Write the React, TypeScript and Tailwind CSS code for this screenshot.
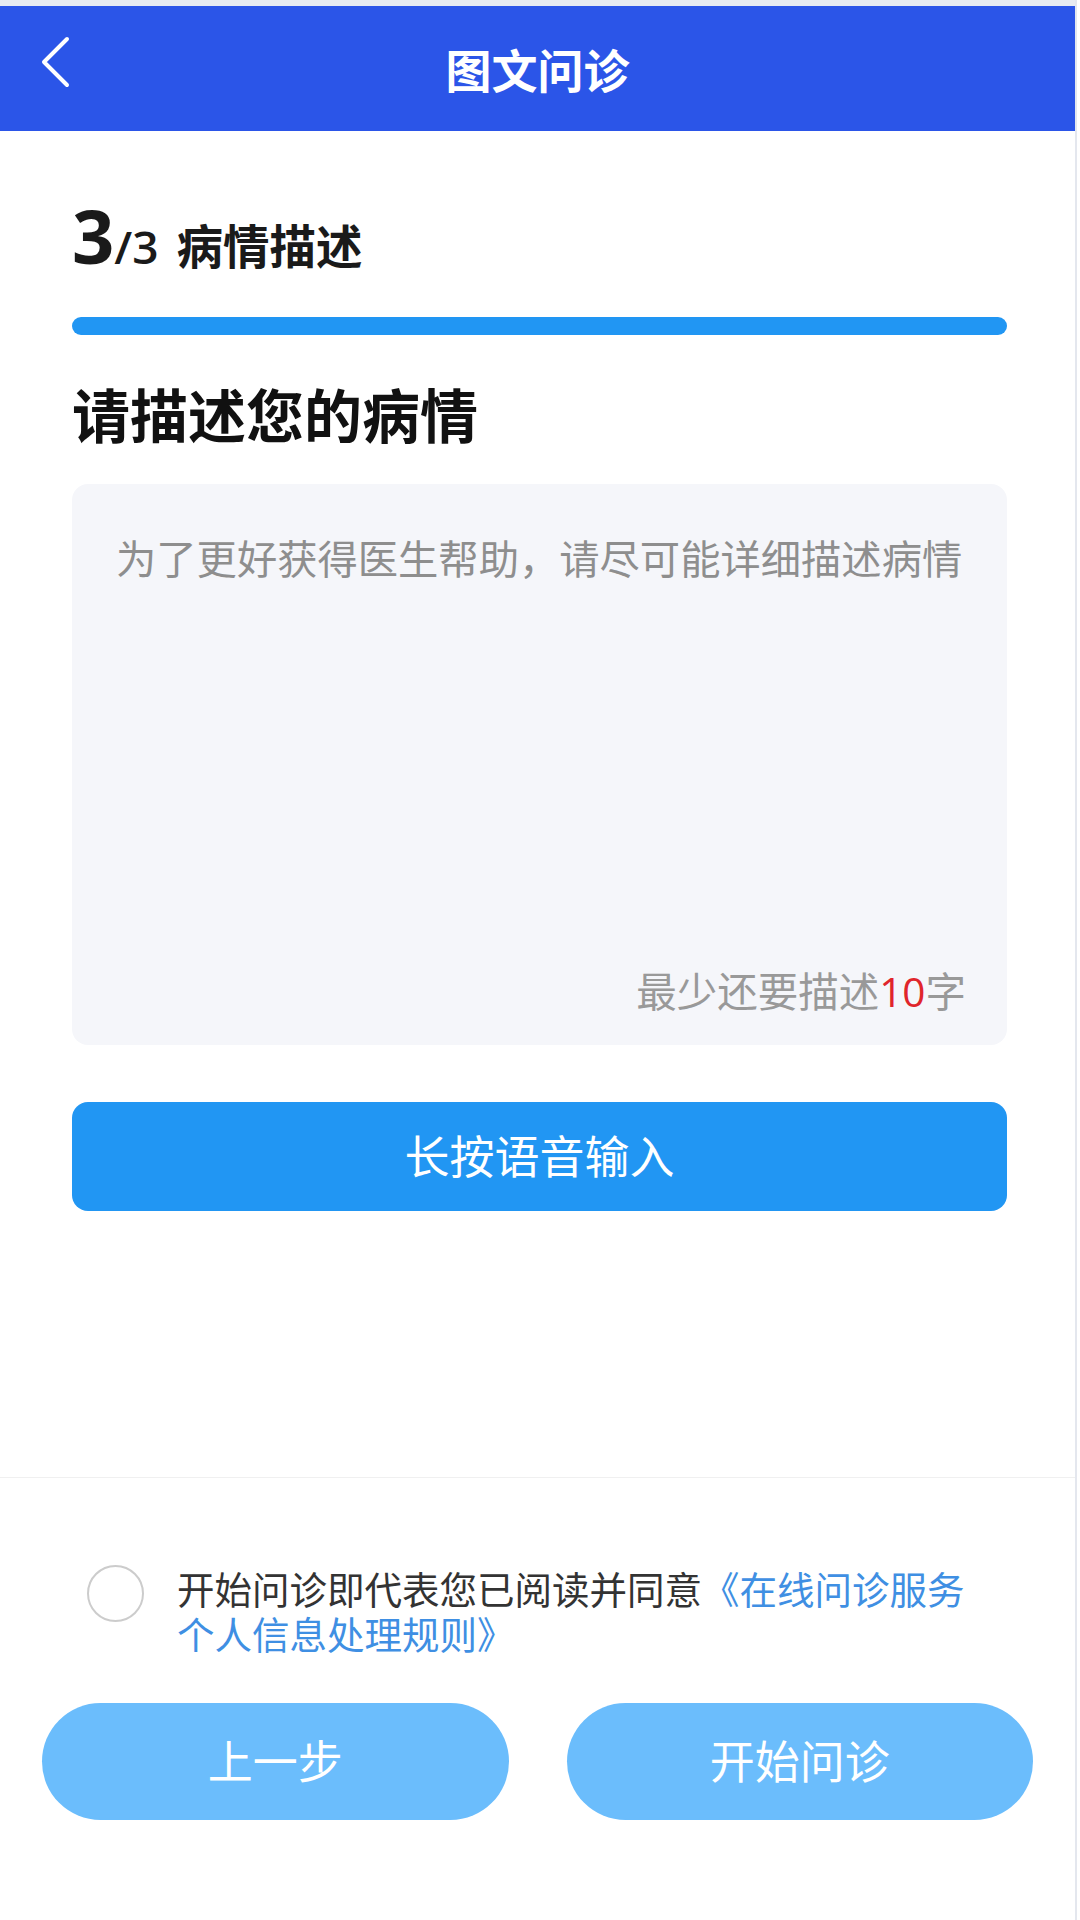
import { useState } from "react";

function BackIcon() {
  return (
    <svg width="30" height="52" viewBox="0 0 30 52" fill="none">
      <polyline
        points="26,3 3,26 26,49"
        stroke="white"
        strokeWidth="4"
        strokeLinecap="round"
        strokeLinejoin="round"
      />
    </svg>
  );
}

export default function App() {
  const [text, setText] = useState("");
  const [agreed, setAgreed] = useState(false);
  const remaining = Math.max(0, 10 - text.length);

  return (
    <div className="min-h-[1920px] w-[1080px] bg-white flex font-['Open_Sans','Noto_Sans_CJK_SC',sans-serif]">
      <div className="w-[1077px] min-h-[1920px] border-r-2 border-[#e4e7ee] flex flex-col">
        <div className="h-[6px] bg-[#e7ebf2]" />

        {/* header */}
        <header className="relative h-[125px] bg-[#2b55e8] flex items-center justify-center">
          <button type="button" className="absolute left-[41px] top-[30px]">
            <BackIcon />
          </button>
          <h1 className="text-white text-[46px] font-bold leading-none pt-[2px]">图文问诊</h1>
        </header>

        <main className="pl-[72px] pr-[68px]">
          {/* step */}
          <div className="mt-[67px] h-[76px] flex items-baseline text-[#1a1a1a]">
            <span className="text-[74px] font-bold leading-[76px]">3</span>
            <span className="text-[46px] font-semibold leading-none">/3</span>
            <span className="ml-[18px] text-[46.5px] font-semibold leading-none">病情描述</span>
          </div>
          <div className="mt-[43px] h-[18px] rounded-full bg-[#2196f3]" />

          <h2 className="mt-[52px] text-[58px] font-bold leading-[58px] text-[#111]">请描述您的病情</h2>

          {/* description box */}
          <div className="mt-[39px] h-[561px] rounded-[16px] bg-[#f5f6fa] flex flex-col">
            <textarea
              value={text}
              onChange={(e) => setText(e.target.value)}
              placeholder="为了更好获得医生帮助，请尽可能详细描述病情"
              className="flex-1 w-full resize-none bg-transparent outline-none px-[44px] pt-[51px] text-[40.3px] leading-[48px] text-[#333] placeholder:text-[#8e8e8e]"
            />
            <div className="pr-[41px] pb-[33px] text-right text-[40.5px] leading-[40px] text-[#999]">
              最少还要描述<span className="text-[#e0252b]">{remaining}</span>字
            </div>
          </div>

          <button
            type="button"
            className="mt-[57px] w-full h-[109px] rounded-[16px] bg-[#2196f3] text-white text-[45px] flex items-center justify-center"
          >
            长按语音输入
          </button>
        </main>

        {/* footer */}
        <footer className="mt-auto border-t border-[#f0f0f0] pt-[87px] pb-[100px]">
          <div className="pl-[87px] flex items-start">
            <button
              type="button"
              onClick={() => setAgreed(!agreed)}
              className={`shrink-0 w-[57px] h-[57px] rounded-full border-2 ${
                agreed ? "border-[#2196f3] bg-[#2196f3]" : "border-[#cccccc]"
              }`}
            />
            <div className="ml-[33px] mt-[2px] w-[800px] text-[37.5px] leading-[45px] text-[#333]">
              <p>
                开始问诊即代表您已阅读并同意<span className="text-[#3f8fe3]">《在线问诊服务</span>
              </p>
              <p className="text-[#3f8fe3]">个人信息处理规则》</p>
            </div>
          </div>

          <div className="mt-[46px] grid grid-cols-2 gap-[58px] px-[42px]">
            <button type="button" className="h-[117px] rounded-full bg-[#6bbdfc] text-white text-[45px]">
              上一步
            </button>
            <button type="button" className="h-[117px] rounded-full bg-[#6bbdfc] text-white text-[45px]">
              开始问诊
            </button>
          </div>
        </footer>
      </div>
    </div>
  );
}
